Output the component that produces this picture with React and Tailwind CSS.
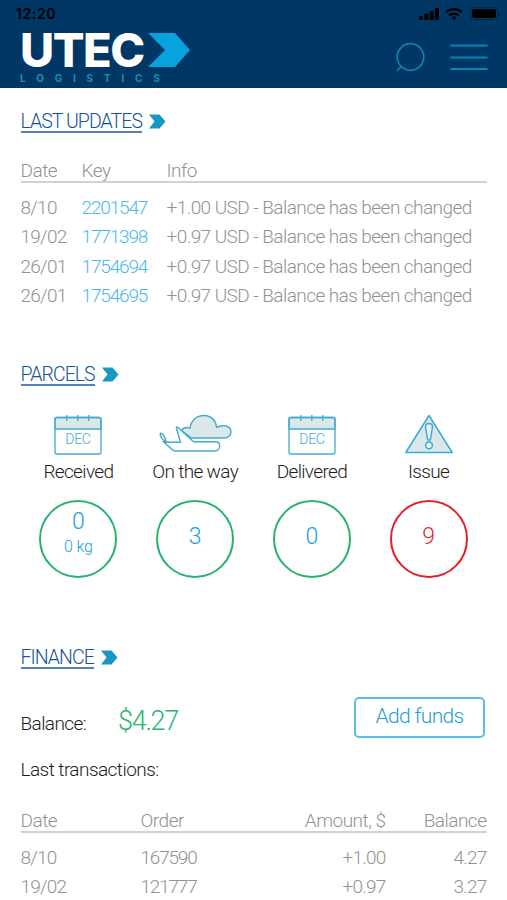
const updates = [
  { date: "8/10", key: "2201547", info: "+1.00 USD - Balance has been changed" },
  { date: "19/02", key: "1771398", info: "+0.97 USD - Balance has been changed" },
  { date: "26/01", key: "1754694", info: "+0.97 USD - Balance has been changed" },
  { date: "26/01", key: "1754695", info: "+0.97 USD - Balance has been changed" },
];

const transactions = [
  { date: "8/10", order: "167590", amount: "+1.00", balance: "4.27" },
  { date: "19/02", order: "121777", amount: "+0.97", balance: "3.27" },
];

function StatusBar() {
  return (
    <div className="flex h-7 items-center justify-between pl-4 pr-[7px] text-black">
      <span className="font-['Inter'] text-[14px] font-semibold leading-7 tracking-[0.6px]">
        12:20
      </span>
      <svg width="82" height="16" viewBox="0 0 82 16" fill="currentColor">
        <rect x="1" y="10" width="4" height="4" rx="1" />
        <rect x="6.3" y="7.5" width="4" height="6.5" rx="1" />
        <rect x="11.6" y="4.8" width="4" height="9.2" rx="1" />
        <rect x="16.9" y="2" width="4" height="12" rx="1" />
        <g fill="none" stroke="currentColor" strokeWidth="2.2">
          <path d="M28.3 6.2a11.3 11.3 0 0 1 15.4 0" />
          <path d="M31.3 9.4a7 7 0 0 1 9.4 0" />
        </g>
        <path d="M33.3 11.4a4.2 4.2 0 0 1 5.4 0L36 14.2z" />
        <rect x="52.5" y="1.5" width="27" height="12" rx="3.5" fill="none" stroke="currentColor" strokeOpacity="0.3" />
        <rect x="54" y="3" width="24" height="9" rx="2" />
        <path d="M80.7 5.5v4" stroke="currentColor" strokeOpacity="0.35" strokeWidth="1.3" />
      </svg>
    </div>
  );
}

function Logo() {
  return (
    <div>
      <div className="flex h-[34px] items-center gap-1">
        <div className="flex w-[124px] items-center">
          <span className="font-['Inter'] text-[47px] font-extrabold leading-[34px] tracking-[-1.5px] text-white">
            UTEC
          </span>
        </div>
        <svg width="42" height="34" viewBox="0 0 42 34" fill="#08a3dc">
          <path d="M0 0h27l15 17-15 17H0l17-17z" />
        </svg>
      </div>
      <div className="mt-[6px] font-['Inter'] text-[10px] font-bold leading-[10px] tracking-[10.8px] text-[#178fb5]">
        LOGISTICS
      </div>
    </div>
  );
}

function Heading({ children }) {
  return (
    <div className="flex items-start gap-[7px]">
      <h2 className="h-[22px] border-b-2 border-[#5584b5] text-[19.5px] font-[350] leading-[22px] tracking-[-0.95px] text-[#165397]">
        {children}
      </h2>
      <svg className="mt-[3px]" width="17" height="15" viewBox="0 0 17 15" fill="#1997c4">
        <path d="M0 .5h10.5l6 7-6 7H0L5.5 7.5z" />
      </svg>
    </div>
  );
}

function CalendarIcon() {
  return (
    <svg width="80" height="44" viewBox="0 0 80 44" fill="none" stroke="#45a9cb" strokeWidth="1.3">
      <path d="M17 16V6.5A2 2 0 0 1 19 4.5h42a2 2 0 0 1 2 2V16z" fill="#dbe8ea" />
      <rect x="17" y="4.5" width="46" height="36.5" rx="2" />
      <path d="M28.8 2v6M39.8 2v6M50.8 2v6" />
      <text
        x="40"
        y="31"
        textAnchor="middle"
        fill="#45a9cb"
        stroke="none"
        className="font-['Roboto'] text-[14px] font-[350] tracking-[-0.3px]"
      >
        DEC
      </text>
    </svg>
  );
}

function PlaneIcon() {
  return (
    <svg width="80" height="44" viewBox="0 0 80 44" fill="none" stroke="#45a9cb" strokeWidth="1.4" strokeLinejoin="round" strokeLinecap="round">
      <path
        d="M26.5 17.5C28.5 14.8 32 14 35 15C36 7.5 41.5 2.5 49 2.5S61 8 61.7 14.5C64 12.8 67 12.6 69.5 12.8C73.5 13.2 76 15.8 76 19S73 25 69 25H36.5z"
        fill="#dbe8ea"
      />
      <path
        d="M22.5 14 38.5 28.8H60.5c2.5 0 4.2 1.5 4.2 4.2s-1.7 5-4.5 5H20.5c-1.5 0-2.5-.6-3.7-1.8L8 28.5l3.2.8H25.5L21.5 15.5c-.3-1.2.3-2 1-1.5z"
        fill="#fff"
      />
      <path
        d="M5.5 20.3c1.6-.6 4.500 3 5.700 8.400C8.500 27.500 4.200 23 5.500 20.300z"
        fill="#fff"
      />
    </svg>
  );
}

function IssueIcon() {
  return (
    <svg width="80" height="44" viewBox="0 0 80 44" stroke="#3aabd3" strokeWidth="1.5" strokeLinejoin="round">
      <path d="M40 2.5 63.2 39.5H16.8z" fill="#dbe8ea" />
      <path d="M36.5 14c0-2.3 1.5-3.5 3.5-3.5s3.5 1.2 3.5 3.5L41.5 26c-.3 1.5-2.7 1.5-3 0z" fill="#edf4f5" />
      <circle cx="40" cy="32.3" r="3.4" fill="#edf4f5" />
    </svg>
  );
}

function Parcel({ icon, label, color = "border-[#29b16f] text-[#22a0dc]", children }) {
  return (
    <div className="flex flex-col items-center">
      {icon}
      <div className="mt-[4px] text-[19px] font-[350] leading-[22px] tracking-[-0.65px] text-[#1c1c1c]">
        {label}
      </div>
      <div
        className={`mt-[17px] flex h-[78px] w-[78px] flex-col items-center rounded-full border-2 font-light ${color}`}
      >
        {children}
      </div>
    </div>
  );
}

export default function App() {
  return (
    <div className="h-[900px] w-[507px] overflow-hidden bg-white font-['Roboto',sans-serif] text-[19px] font-light text-[#929292]">
      <header className="h-[88px] bg-[#003764]">
        <StatusBar />
        <div className="flex items-start justify-between pl-5 pr-[19px] pt-[5px]">
          <Logo />
          <div className="flex gap-[24px] pt-[8px]">
            <svg width="32" height="32" viewBox="0 0 32 32" fill="none" stroke="#147fa9" strokeWidth="1.7">
              <circle cx="16.5" cy="16" r="13.3" />
              <path d="M7 25.5 3 30" />
            </svg>
            <svg width="38" height="32" viewBox="0 0 38 32" stroke="#0b83b4" strokeWidth="2">
              <path d="M.5 4.5h37M.5 16.5h37M.5 28h37" />
            </svg>
          </div>
        </div>
      </header>

      <section className="h-[253px] px-[20.5px] pt-[23px]">
        <Heading>LAST UPDATES</Heading>
        <div className="mt-[27px] grid grid-cols-[61px_85px_1fr] border-b-2 border-[#d2d2d2] leading-[21px] tracking-[-0.5px]">
          <span>Date</span>
          <span>Key</span>
          <span>Info</span>
        </div>
        <div className="mt-[10px]">
          {updates.map((row) => (
            <div
              key={row.key}
              className="grid h-[29.4px] grid-cols-[61px_85px_1fr] whitespace-nowrap leading-[29.4px]"
            >
              <span className="tracking-[-0.75px]">{row.date}</span>
              <span className="tracking-[-1.15px] text-[#4bb8ea]">{row.key}</span>
              <span className="tracking-[-0.56px]">{row.info}</span>
            </div>
          ))}
        </div>
      </section>

      <section className="h-[283px] pt-[23px]">
        <div className="px-[20.5px]">
          <Heading>PARCELS</Heading>
        </div>
        <div className="ml-5 mt-[27px] grid w-[467px] grid-cols-4">
          <Parcel icon={<CalendarIcon />} label="Received">
            <span className="mt-[7px] text-[23px] leading-[26px]">0</span>
            <span className="text-[16px] leading-[24px] tracking-[-0.2px]">0 kg</span>
          </Parcel>
          <Parcel icon={<PlaneIcon />} label="On the way">
            <span className="mt-[21px] text-[23px] leading-[28px]">3</span>
          </Parcel>
          <Parcel icon={<CalendarIcon />} label="Delivered">
            <span className="mt-[21px] text-[23px] leading-[28px]">0</span>
          </Parcel>
          <Parcel icon={<IssueIcon />} label="Issue" color="border-[#e41f2b] text-[#e41f2b]">
            <span className="mt-[21px] text-[23px] leading-[28px]">9</span>
          </Parcel>
        </div>
      </section>

      <section className="px-[20.5px] pt-[23px]">
        <Heading>FINANCE</Heading>
        <div className="mt-[28px] flex justify-between">
          <div className="flex items-baseline gap-8 pt-[8px]">
            <span className="font-[350] tracking-[-0.6px] text-[#1c1c1c]">Balance:</span>
            <span className="text-[27px] leading-[32px] tracking-[-1.3px] text-[#2cb673]">
              $4.27
            </span>
          </div>
          <button className="mr-[1.5px] h-[41px] w-[131px] rounded-[5px] border-2 border-[#5cbde3] pb-[2px] text-[21px] leading-[35px] tracking-[-0.65px] text-[#22a0d6]">
            Add funds
          </button>
        </div>
        <div className="mt-[21px] font-[350] leading-5 tracking-[-0.55px] text-[#1c1c1c]">
          Last transactions:
        </div>
        <div className="mt-[30px] grid grid-cols-[120px_1fr_120px_101px] border-b-2 border-[#d2d2d2] leading-[21px] tracking-[-0.5px]">
          <span>Date</span>
          <span>Order</span>
          <span className="text-right">Amount, $</span>
          <span className="text-right">Balance</span>
        </div>
        <div className="mt-[10.5px]">
          {transactions.map((row) => (
            <div
              key={row.order}
              className="grid h-[29.3px] grid-cols-[120px_1fr_120px_101px] leading-[29.3px] tracking-[-0.8px]"
            >
              <span>{row.date}</span>
              <span className="tracking-[-1.2px]">{row.order}</span>
              <span className="text-right">{row.amount}</span>
              <span className="text-right">{row.balance}</span>
            </div>
          ))}
        </div>
      </section>
    </div>
  );
}
